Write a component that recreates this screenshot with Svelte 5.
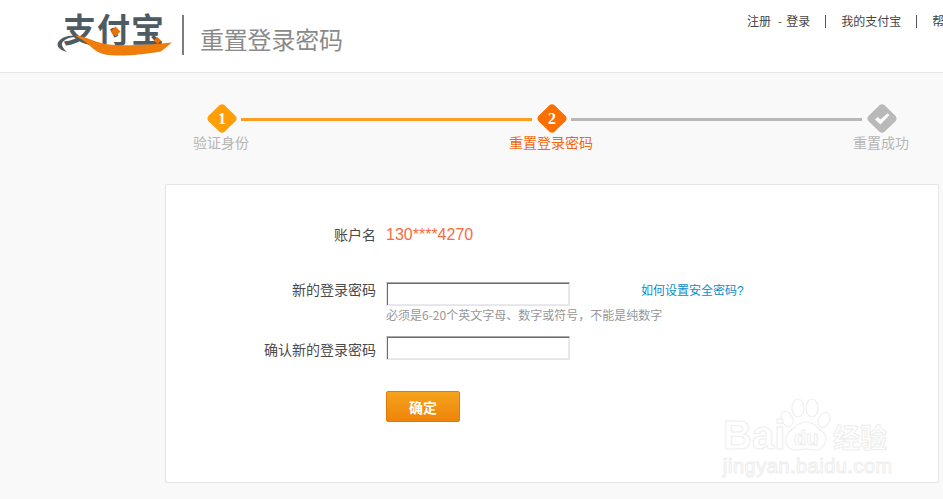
<script>
  const steps = [
    { n: '1', label: '验证身份', state: 'done' },
    { n: '2', label: '重置登录密码', state: 'current' },
    { n: '', label: '重置成功', state: 'todo' }
  ];
</script>

<div class="page">
  <header class="header">
    <div class="brand">
      <div class="logo">
        <span class="logo-text">支付宝</span>
        <svg class="swoosh" viewBox="0 0 116 22" width="116" height="22" aria-hidden="true">
          <path d="M9.700 18C3 16 -.5 12.500.8 9 2.500 4.500 9 1.500 17 1.500c4 0 7 1 10 3-5-1.500-9-2-13-1C8 5 4.500 8 5 11c.4 2.500 3 5 4.700 7z" fill="#4f5b62"/>
          <path d="M18 1.500C30 2 38 9 52 10.500c22 2 44 0 63-2-4 3-7 6-11 9-24 4-42 5-56 3C36 18 31 8 22 4z" fill="#ee7d0c"/>
        </svg>
        <i class="dot dot-a"></i>
        <i class="dot dot-b"></i>
      </div>
      <span class="divider"></span>
      <h1 class="title">重置登录密码</h1>
    </div>
    <nav class="nav">
      <a>注册</a><span class="dash">-</span><a>登录</a>
      <span class="sep"></span>
      <a>我的支付宝</a>
      <span class="sep"></span>
      <a>帮</a>
    </nav>
  </header>

  <section class="steps">
    <div class="track">
      {#each steps as s, i}
        <div class="mark {s.state}">
          <svg viewBox="0 0 30 29" width="30" height="29" aria-hidden="true">
            <path class="shape" d="M12.500 1.200c1.400-1.200 3.600-1.200 5 0l10.900 10.600c1.500 1.500 1.500 3.900 0 5.400L17.500 27.800c-1.400 1.200-3.600 1.200-5 0L1.600 17.200c-1.500-1.500-1.500-3.900 0-5.400z"/>
            {#if !s.n}
              <path d="M8 15.500l2.500-2.500 3 2.500 7-6 2 1.500-9 9.500z" fill="#fff"/>
            {/if}
          </svg>
          {#if s.n}<b>{s.n}</b>{/if}
        </div>
        {#if i < steps.length - 1}
          <span class="bar {s.state}"></span>
        {/if}
      {/each}
    </div>
    <div class="labels">
      {#each steps as s}
        <span class="label {s.state}">{s.label}</span>
      {/each}
    </div>
  </section>

  <main class="card">
    <div class="row first">
      <span class="key tall">账户名</span>
      <span class="account">130****4270</span>
    </div>
    <div class="row second">
      <label class="key" for="pw1">新的登录密码</label>
      <div>
        <div class="field">
          <input id="pw1" type="password" />
          <a class="help-link">如何设置安全密码?</a>
        </div>
        <p class="hint">必须是6-20个英文字母、数字或符号，不能是纯数字</p>
      </div>
    </div>
    <div class="row third">
      <label class="key confirm" for="pw2">确认新的登录密码</label>
      <div class="field">
        <input id="pw2" type="password" />
      </div>
    </div>
    <div class="row action">
      <span></span>
      <button type="button">确定</button>
    </div>

    <div class="watermark" aria-hidden="true">
      <svg class="paw" viewBox="0 0 52 56" width="52" height="56">
        <g fill="#fff" stroke="#efefef" stroke-width="1.200">
          <ellipse cx="7" cy="21" rx="5.500" ry="8" transform="rotate(-25 7 21)"/>
          <ellipse cx="18" cy="10" rx="6" ry="9"/>
          <ellipse cx="32" cy="10" rx="6" ry="9"/>
          <ellipse cx="44" cy="22" rx="5.500" ry="8" transform="rotate(25 44 22)"/>
          <path d="M26 24c9 0 12 7 17 10 5 5 3 18-8 18-4 0-6-1-9-1s-6 1-10 1C5 52 3 40 9 34c5-3 8-10 17-10z"/>
        </g>
      </svg>
      <span class="wm-bai">Bai</span>
      <span class="wm-du">du</span>
      <span class="wm-cn">经验</span>
      <span class="wm-url">jingyan.baidu.com</span>
    </div>
  </main>
</div>

<style>
  :global(body) {
    margin: 0;
    background: #f9f9f9;
    overflow: hidden;
  }
  .page {
    height: 499px;
    width: 943px;
    overflow: hidden;
    position: relative;
    font-family: "Noto Sans CJK SC", "Liberation Sans", sans-serif;
    font-size: 14px;
    color: #4a4a4a;
  }
  .header {
    height: 72px;
    background: #fff;
    border-bottom: 1px solid #e6e6e6;
    display: flex;
    align-items: flex-start;
  }
  .brand {
    flex: 0 0 747px;
    display: flex;
    align-items: flex-start;
    box-sizing: border-box;
    padding-left: 57px;
  }
  .logo {
    position: relative;
    width: 116px;
    height: 60px;
  }
  .logo-text {
    position: absolute;
    left: 6px;
    top: 8px;
    font-size: 33px;
    line-height: 40px;
    font-weight: 700;
    color: #4f5b62;
    letter-spacing: 1px;
    white-space: nowrap;
  }
  .swoosh {
    position: absolute;
    left: 0;
    top: 34px;
  }
  .dot {
    position: absolute;
    background: #e9710b;
    transform: rotate(45deg);
  }
  .dot-a { left: 55px; top: 28px; width: 7px; height: 7px; }
  .dot-b { left: 98px; top: 38px; width: 5px; height: 5px; }
  .divider {
    width: 2px;
    height: 40px;
    background: #7d7d7d;
    margin: 15px 0 0 9px;
  }
  .title {
    margin: 22px 0 0 16px;
    font-size: 24px;
    line-height: 34px;
    font-weight: 400;
    color: #8a8a8a;
    letter-spacing: -.2px;
    white-space: nowrap;
  }
  .nav {
    flex: none;
    display: flex;
    align-items: center;
    font-size: 12px;
    line-height: 18px;
    margin-top: 12px;
    color: #444;
    white-space: nowrap;
  }
  .dash { margin: 0 4px 0 7px; color: #555; }
  .sep {
    width: 1px;
    height: 13px;
    background: #555;
    margin: 0 15px;
  }
  .steps {
    padding-top: 31px;
    height: 80px;
  }
  .track {
    display: flex;
    align-items: flex-start;
    margin-left: 207px;
  }
  .mark {
    position: relative;
    flex: none;
    width: 30px;
    height: 29px;
    display: flex;
    align-items: center;
    justify-content: center;
  }
  .mark svg { position: absolute; inset: 0; }
  .mark b {
    position: relative;
    color: #fff;
    font-family: "Liberation Serif", serif;
    font-size: 16px;
    font-weight: 700;
    line-height: 1;
  }
  .done .shape { fill: #ff9e05; }
  .current .shape { fill: #f96f03; }
  .todo .shape { fill: #b9b9b9; }
  .bar {
    flex: none;
    width: 291px;
    height: 3px;
    margin: 14px 5px 0 4px;
  }
  .bar.done { background: #ff9d22; }
  .bar.current { background: #b8b8b8; }
  .labels {
    display: grid;
    grid-template-columns: repeat(3, 330px);
    margin: -1px 0 0 56px;
    line-height: 20px;
    text-align: center;
  }
  .label { color: #b5b5b5; }
  .label.current { color: #f5670a; }

  .card {
    position: relative;
    box-sizing: border-box;
    margin-left: 165px;
    width: 774px;
    height: 299px;
    background: #fff;
    border: 1px solid #e4e4e4;
    border-radius: 2px;
    padding-top: 40px;
  }
  .row {
    display: grid;
    grid-template-columns: 210px auto;
    column-gap: 10px;
    align-items: start;
  }
  .key {
    text-align: right;
    line-height: 17px;
    color: #4a4a4a;
  }
  .key.tall { line-height: 18px; }
  .key.confirm { line-height: 28px; }
  .account {
    font-family: "Liberation Sans", sans-serif;
    font-size: 16px;
    line-height: 20px;
    color: #fb6a3c;
  }
  .second { margin-top: 36px; }
  .third { margin-top: 11px; }
  .action { margin-top: 28px; }
  .field {
    display: flex;
    align-items: flex-start;
    padding-top: 1px;
  }
  input {
    box-sizing: border-box;
    width: 184px;
    height: 24px;
    padding: 0;
    margin: 0;
    background: #fff;
    border: 1px solid;
    border-color: #a9a9a9 #e2e5eb #e2e5eb #e2e5eb;
    box-shadow: inset 1px 1px 0 #6a6a6a, inset -1px -1px 0 #e8eaee;
    outline: none;
  }
  .help-link {
    margin: 1px 0 0 71px;
    font-family: "Liberation Sans", "Noto Sans CJK SC", sans-serif;
    font-size: 12px;
    line-height: 16px;
    color: #0a8ccb;
    white-space: nowrap;
  }
  .hint {
    margin: 0;
    font-size: 12px;
    line-height: 18px;
    color: #979797;
    white-space: nowrap;
  }
  button {
    box-sizing: border-box;
    width: 74px;
    height: 31px;
    padding: 0;
    font-family: inherit;
    font-size: 14px;
    font-weight: 700;
    color: #fff;
    background: linear-gradient(#f6a31e, #ee840a);
    border: 1px solid #e4780d;
    border-radius: 2px;
  }

  .watermark {
    position: absolute;
    left: 0;
    top: 0;
    pointer-events: none;
  }
  .paw { position: absolute; left: 614px; top: 213px; }
  .watermark span {
    position: absolute;
    white-space: nowrap;
    color: #fff;
    -webkit-text-stroke: 1px #eeeeee;
    font-family: "Liberation Sans", sans-serif;
  }
  .wm-bai { left: 557px; top: 227px; font-size: 40px; line-height: 46px; font-weight: 700; }
  .wm-du { left: 628px; top: 240px; font-size: 20px; line-height: 26px; font-weight: 700; }
  .watermark .wm-cn { left: 667px; top: 235px; font-size: 27px; line-height: 34px; font-family: "Noto Sans CJK SC", sans-serif; font-weight: 700; }
  .wm-url { left: 557px; top: 268px; font-size: 20px; line-height: 26px; letter-spacing: .5px; }
</style>
